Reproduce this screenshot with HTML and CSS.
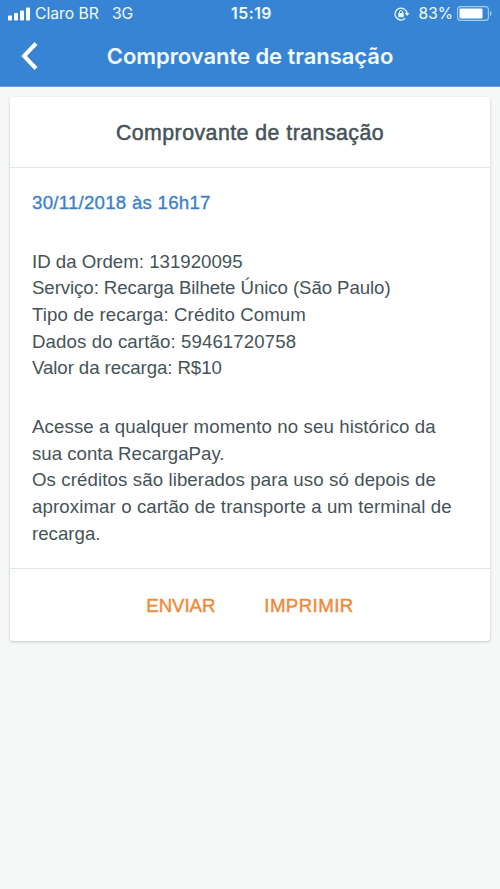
FILE: index.html
```html
<!DOCTYPE html>
<html lang="pt-BR">
<head>
<meta charset="utf-8">
<title>Comprovante de transação</title>
<link rel="stylesheet" href="styles.css">
</head>
<body>
<header class="top">
  <div class="status">
    <div class="status-side">
      <svg class="signal" width="23" height="14" viewBox="0 0 23 14" fill="#fff"><rect x="0" y="8.500" width="4" height="5" rx="1"/><rect x="6" y="6" width="4" height="7.500" rx="1"/><rect x="12" y="3.500" width="4" height="10" rx="1"/><rect x="18" y="0.500" width="4" height="13" rx="1"/></svg>
      <span class="carrier">Claro BR</span><span class="network">3G</span>
    </div>
    <span class="clock">15:19</span>
    <div class="status-side status-right">
      <svg class="lock" width="16" height="14" viewBox="0 0 16 14" fill="none" stroke="#eaf7ff"><path d="M11.200 11.400A6 6 0 1 1 13 6.300" stroke-width="1.3"/><path d="M10.700 6h4.800l-2.400 3z" fill="#eaf7ff" stroke="none"/><rect x="4.200" y="6" width="5.600" height="4.200" rx=".5" fill="#eaf7ff" stroke="none"/><path d="M5.500 6.500V5a1.500 1.500 0 0 1 3 0v1.500" stroke-width="1"/></svg>
      <span class="percent">83%</span>
      <svg width="36" height="15" viewBox="0 0 36 15"><rect x=".6" y=".6" width="30.800" height="13.800" rx="3" fill="none" stroke="#a5cdf2" stroke-width="1.1"/><rect x="2.500" y="2.500" width="23" height="10" rx="1" fill="#fff"/><path d="M33 5c2 .8 2 4.200 0 5z" fill="#a5cdf2"/></svg>
    </div>
  </div>
  <div class="nav">
    <svg class="back" width="18" height="28" viewBox="0 0 18 28" fill="none" stroke="#fff" stroke-width="4"><path d="M16 1.500L4 14l12 12.500"/></svg>
    <h1 class="nav-title">Comprovante de transação</h1>
  </div>
</header>
<main class="card">
  <h2 class="card-title">Comprovante de transação</h2>
  <section class="content">
    <p class="date">30/11/2018 às 16h17</p>
    <p class="details">ID da Ordem: 131920095<br><span class="snug">Serviço: Recarga Bilhete Único (São Paulo)</span><br><span class="loose">Tipo de recarga: Crédito Comum</span><br><span class="loose">Dados do cartão: 59461720758</span><br><span class="snug">Valor da recarga: R$10</span></p>
    <p class="note loose">Acesse a qualquer momento no seu histórico da<br><span class="snug">sua conta RecargaPay.</span><br>Os créditos são liberados para uso só depois de<br>aproximar o cartão de transporte a um terminal de<br><span class="snug">recarga.</span></p>
  </section>
  <footer class="actions"><a class="action snug">ENVIAR</a><a class="action action-print">IMPRIMIR</a></footer>
</main>
</body>
</html>
```
FILE: styles.css
```css
* { box-sizing: border-box; }
body { margin: 0; min-height: 889px; background: #f6f8f8; color: #455358; font-family: "Liberation Sans", Arial, sans-serif; }
h1, h2, p { margin: 0; }
svg { display: block; flex: none; }
.top { height: 87px; background: #3884d4; border-bottom: 1px solid #5f9bdc; color: #f2fbff; }
.status { height: 27px; padding: 0 7px 0 8px; display: flex; align-items: center; font: 16px/27px Inter, sans-serif; }
.status-side { flex: 1; display: flex; align-items: center; }
.status-right { justify-content: flex-end; }
.carrier { margin-left: 4px; font-size: 15.700px; }
.network { margin-left: 13px; font-size: 15.700px; }
.clock { padding-left: 2px; font-weight: 600; font-size: 15.800px; letter-spacing: .5px; }
.lock { margin-right: 9px; }
.percent { margin-right: 4px; font-size: 15.500px; }
.nav { height: 59px; padding: 0 20px; display: flex; align-items: center; }
.back { margin-top: -2px; }
.nav-title { flex: 1; margin-right: 18px; text-align: center; font: 600 22px/59px Inter, sans-serif; letter-spacing: -.05px; }
.card { margin: 10px 10px 0; height: 544px; background: #fff; border-radius: 3px; box-shadow: 0 1px 3px rgba(40, 60, 60, .25); }
.card-title { height: 71px; border-bottom: 1px solid #e1e7e8; text-align: center; font-size: 21.300px; font-weight: 400; line-height: 72px; letter-spacing: .47px; -webkit-text-stroke: .5px; }
.content { height: 400px; padding: 22px 22px 0; font-size: 18.670px; line-height: 26.670px; white-space: nowrap; }
.date { color: #3c80cc; letter-spacing: .25px; -webkit-text-stroke: .35px; }
.details, .note { margin-top: 32px; }
.loose { letter-spacing: .1px; }
.note .snug { letter-spacing: 0; }
.snug { letter-spacing: -.08px; }
.actions { height: 73px; padding-top: 1px; border-top: 1px solid #dfe5e7; display: flex; justify-content: center; align-items: center; gap: 49px; color: #ef8a3b; font-size: 18.670px; -webkit-text-stroke: .45px; }
.action-print { letter-spacing: .42px; }
```
